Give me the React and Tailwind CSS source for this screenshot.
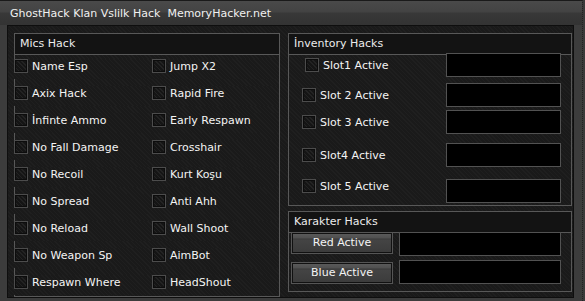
import React from 'react'

const font = { fontFamily: '"DejaVu Sans", Verdana, sans-serif' }

const misc = [
  ['Name Esp', 'Jump X2'],
  ['Axix Hack', 'Rapid Fire'],
  ['İnfinte Ammo', 'Early Respawn'],
  ['No Fall Damage', 'Crosshair'],
  ['No Recoil', 'Kurt Koşu'],
  ['No Spread', 'Anti Ahh'],
  ['No Reload', 'Wall Shoot'],
  ['No Weapon Sp', 'AimBot'],
  ['Respawn Where', 'HeadShout'],
]

const slots = [
  { label: 'Slot1 Active', pl: 'pl-[16px]', mt: '-mt-[2px]', align: 'items-center' },
  { label: 'Slot 2 Active', pl: 'pl-[13px]', mt: 'mt-[6px]', align: 'items-center' },
  { label: 'Slot 3 Active', pl: 'pl-[13px]', mt: 'mt-[3px]', align: 'items-center' },
  { label: 'Slot4 Active', pl: 'pl-[13px]', mt: 'mt-[9px]', align: 'items-center' },
  { label: 'Slot 5 Active', pl: 'pl-[13px]', mt: 'mt-[12px]', align: 'items-start' },
]

function Check({ label }) {
  return (
    <div className="flex items-center">
      <span className="w-[14px] h-[14px] shrink-0 border border-[#4c4c4c] shadow-[inset_0_0_0_1px_#0c0c0c] bg-[repeating-linear-gradient(45deg,#232323_0px,#232323_1px,#151515_1px,#151515_3px)]" />
      <span className="ml-[4px] text-[11px] leading-none text-[#f4f4f4] whitespace-nowrap">{label}</span>
    </div>
  )
}

function Header({ title }) {
  return (
    <div className="h-[21px] shrink-0 flex items-center pl-[5px] bg-[#131313] border-b border-[#585858] text-[11px] text-[#ececec]">
      {title}
    </div>
  )
}

function TextBox({ w }) {
  return <div className={`${w} h-[24px] shrink-0 bg-black border border-[#525252] relative`} />
}

function Button({ label }) {
  return (
    <div className="w-[102px] h-[22px] shrink-0 relative flex items-center justify-center border border-[#555] shadow-[inset_0_0_0_1px_#111] bg-[linear-gradient(#111_0px,#111_1px,#5a5a5a_1px,#505050_5px,#3a3a3a_6px,#444_7px,#3b3b3b_100%)] text-[11px] text-[#f4f4f4] pt-[1px]">
      {label}
    </div>
  )
}

export default function App() {
  return (
    <div className="w-[585px] h-[301px] flex bg-[#3c3c3c] overflow-hidden" style={font}>
      <div className="w-[582px] flex flex-col">
        <div className="h-[25px] shrink-0 border-t border-[#1a1a1a] bg-[linear-gradient(#4a4a4a_0px,#434343_11px,#383838_12px,#333333_100%)] pl-[10px] pt-[3px] flex items-center text-[11px] text-[#f0f0f0] whitespace-pre">
          GhostHack Klan Vslilk Hack  MemoryHacker.net
        </div>
        <div className="ml-[7px] w-[567px] h-[273px] border border-[#0e0e0e] bg-[repeating-linear-gradient(45deg,#1f1f1f_0px,#1f1f1f_1px,#1a1a1a_1px,#1a1a1a_3px)] pt-[7px] pl-[6px] pr-[1px] flex gap-[8px]">
          <div className="w-[266px] h-[264px] border border-[#585858] flex flex-col">
            <Header title="Mics Hack" />
            <div className="mt-[4px] -ml-px flex flex-col gap-[7px]">
              {misc.map(([a, b]) => (
                <div key={a} className="h-[20px] grid grid-cols-[138px_1fr] items-start bg-[repeating-linear-gradient(45deg,#1f1f1f_0px,#1f1f1f_1px,#1a1a1a_1px,#1a1a1a_3px)]">
                  <Check label={a} />
                  <Check label={b} />
                </div>
              ))}
            </div>
          </div>
          <div className="w-[284px] flex flex-col gap-[5px]">
            <div className="h-[173px] border border-[#585858] flex flex-col">
              <Header title="İnventory Hacks" />
              {slots.map((s) => (
                <div key={s.label} className={`flex ${s.align} ${s.mt} pr-[10px]`}>
                  <div className={`flex-1 ${s.pl} ${s.label === 'Slot 5 Active' ? '' : 'self-center'}`}>
                    <Check label={s.label} />
                  </div>
                  <TextBox w="w-[115px]" />
                </div>
              ))}
            </div>
            <div className="h-[81px] border border-[#585858] flex flex-col">
              <Header title="Karakter Hacks" />
              <div className="-mt-[1px] flex items-start pl-[2px] gap-[6px]">
                <Button label="Red Active" />
                <TextBox w="w-[162px]" />
              </div>
              <div className="mt-[4px] flex items-end pl-[2px] gap-[6px]">
                <Button label="Blue Active" />
                <TextBox w="w-[162px]" />
              </div>
            </div>
          </div>
        </div>
      </div>
      <div className="flex-1 bg-[#3a3a3a] border-l border-dotted border-[#222]" />
    </div>
  )
}
